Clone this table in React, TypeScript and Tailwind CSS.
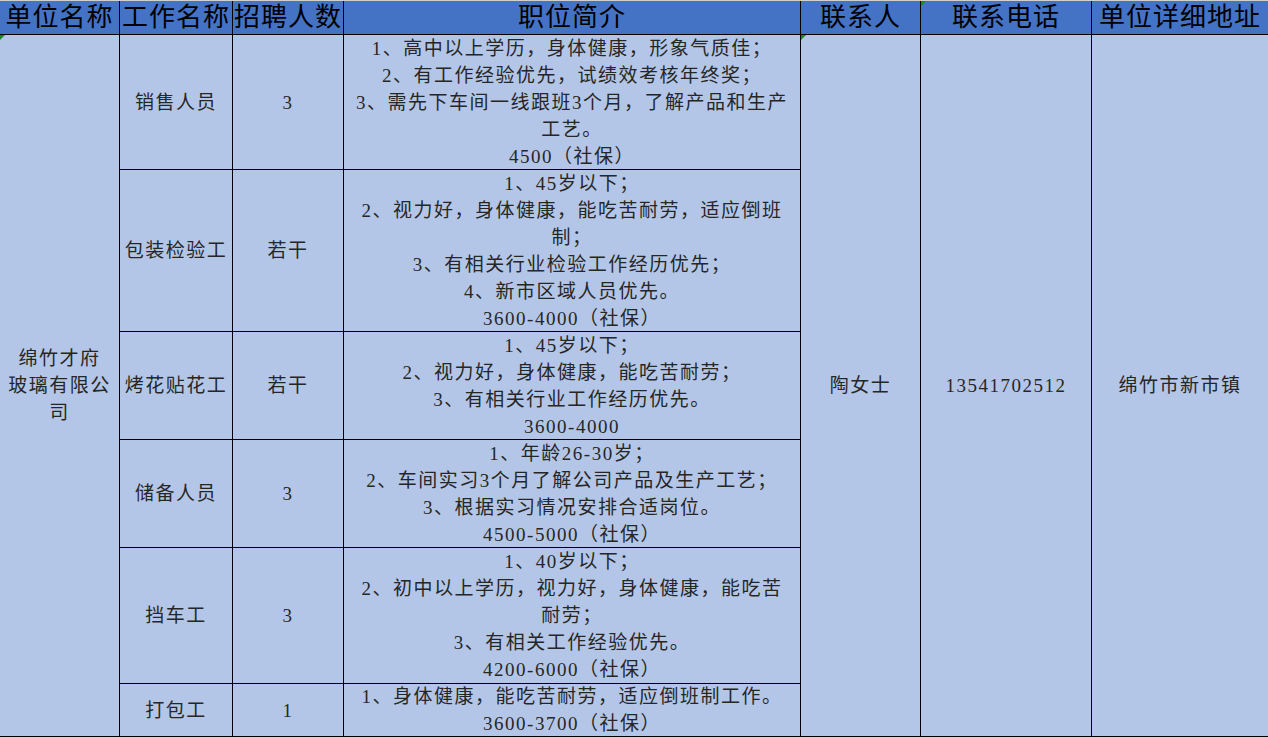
import { Fragment } from "react";

const headers = ["单位名称", "工作名称", "招聘人数", "职位简介", "联系人", "联系电话", "单位详细地址"];

const jobs = [
  {
    title: "销售人员",
    count: "3",
    lines: [
      "1、高中以上学历，身体健康，形象气质佳；",
      "2、有工作经验优先，试绩效考核年终奖；",
      "3、需先下车间一线跟班3个月，了解产品和生产",
      "工艺。",
      "4500（社保）",
    ],
  },
  {
    title: "包装检验工",
    count: "若干",
    lines: [
      "1、45岁以下；",
      "2、视力好，身体健康，能吃苦耐劳，适应倒班",
      "制；",
      "3、有相关行业检验工作经历优先；",
      "4、新市区域人员优先。",
      "3600-4000（社保）",
    ],
  },
  {
    title: "烤花贴花工",
    count: "若干",
    lines: [
      "1、45岁以下；",
      "2、视力好，身体健康，能吃苦耐劳；",
      "3、有相关行业工作经历优先。",
      "3600-4000",
    ],
  },
  {
    title: "储备人员",
    count: "3",
    lines: [
      "1、年龄26-30岁；",
      "2、车间实习3个月了解公司产品及生产工艺；",
      "3、根据实习情况安排合适岗位。",
      "4500-5000（社保）",
    ],
  },
  {
    title: "挡车工",
    count: "3",
    lines: [
      "1、40岁以下；",
      "2、初中以上学历，视力好，身体健康，能吃苦",
      "耐劳；",
      "3、有相关工作经验优先。",
      "4200-6000（社保）",
    ],
  },
  {
    title: "打包工",
    count: "1",
    lines: ["1、身体健康，能吃苦耐劳，适应倒班制工作。", "3600-3700（社保）"],
  },
];

// little green corner mark, like the spreadsheet's error indicator
function Flag() {
  return (
    <span className="absolute left-0 top-0 h-0 w-0 border-t-[5px] border-r-[5px] border-t-[#1a8a1a] border-r-transparent" />
  );
}

const cell =
  "relative flex flex-col items-center justify-center bg-[#b4c6e7] text-center text-[19px] leading-[27px] tracking-[1.5px] text-[#262626]";

export default function App() {
  return (
    <div
      className="w-[1268px] h-[737px] overflow-hidden bg-white"
      style={{ fontFamily: '"Liberation Serif", "Noto Sans CJK SC", serif' }}
    >
      <div className="grid grid-cols-[119px_112px_110px_456px_119px_170px_176px] grid-rows-[33px_134px_161px_107px_107px_135px_52px] gap-px bg-black border-t border-t-[#d0d0d0] border-b border-b-black">
        {headers.map((h, i) => (
          <div
            key={h}
            className="relative flex items-center justify-center bg-[#4472c4] text-[26px] leading-[33px] tracking-[1px] text-black whitespace-nowrap"
          >
            {i === 5 && <Flag />}
            {h}
          </div>
        ))}

        {jobs.map((job, idx) => (
          <Fragment key={job.title}>
            {idx === 0 && (
              <div className={`${cell} row-span-6 px-2`}>
                <Flag />
                <div>绵竹才府</div>
                <div>玻璃有限公</div>
                <div>司</div>
              </div>
            )}
            <div className={`${cell} whitespace-nowrap`}>{job.title}</div>
            <div className={cell}>{job.count}</div>
            <div className={cell}>
              {job.lines.map((l) => (
                <div key={l} className="whitespace-nowrap">
                  {l}
                </div>
              ))}
            </div>
            {idx === 0 && (
              <>
                <div className={`${cell} row-span-6`}>
                  <Flag />
                  陶女士
                </div>
                <div className={`${cell} row-span-6`}>13541702512</div>
                <div className={`${cell} row-span-6`}>绵竹市新市镇</div>
              </>
            )}
          </Fragment>
        ))}
      </div>
    </div>
  );
}
